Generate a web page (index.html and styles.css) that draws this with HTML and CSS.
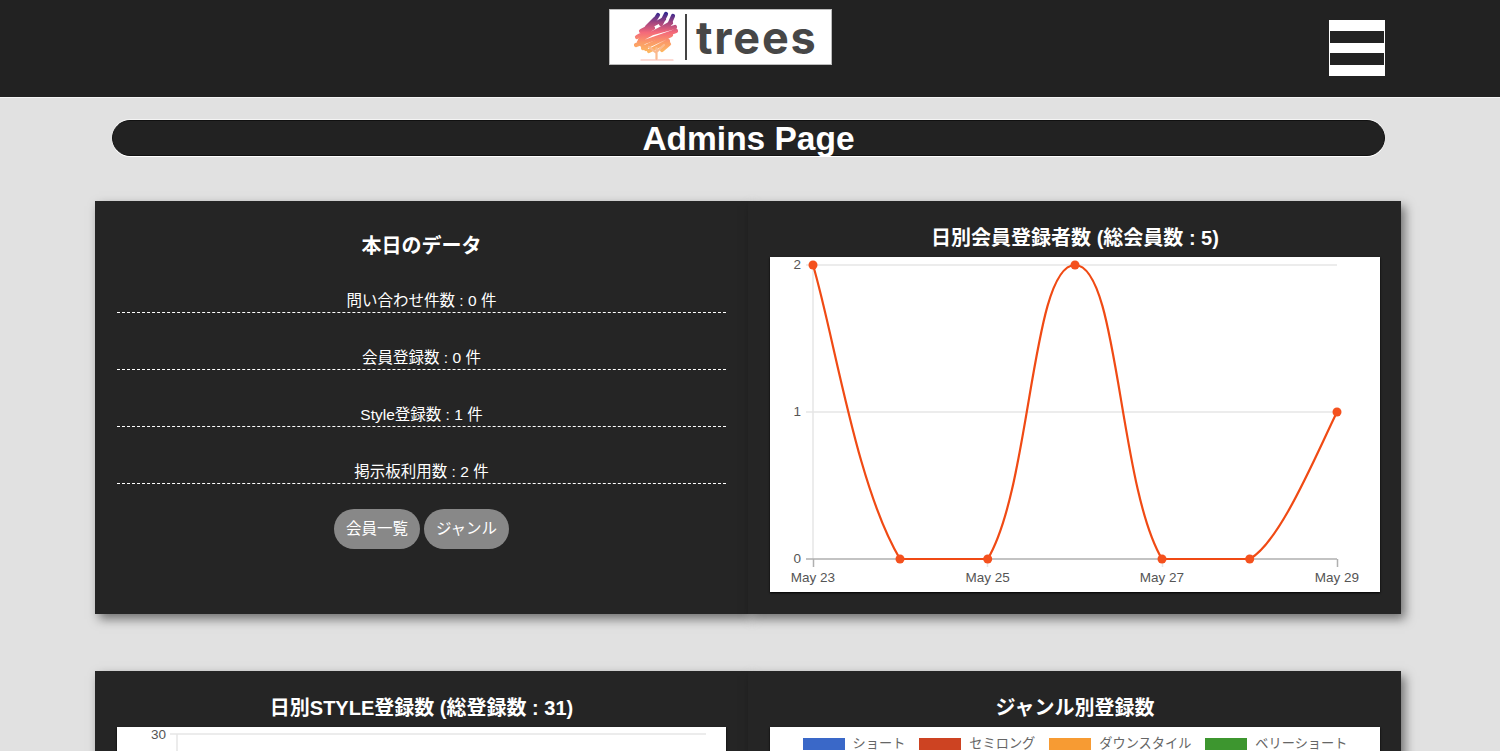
FILE: index.html
```html
<!DOCTYPE html>
<html lang="ja">
<head>
    <meta charset="UTF-8">
    <meta name="viewport" content="width=device-width, initial-scale=1.0">
    <title>Admins Page</title>
    <link rel="stylesheet" href="styles.css">
</head>
<body>
    <header class="site-header">
        <a class="logo" href="#">
            <svg class="logo-tree" width="56" height="54" viewBox="0 0 56 54" fill="none" stroke-linecap="round">
                <defs>
                    <linearGradient id="treeFill" gradientUnits="userSpaceOnUse" x1="0" y1="3" x2="0" y2="42">
                        <stop offset="0" stop-color="#35288f"/>
                        <stop offset="0.25" stop-color="#a5467f"/>
                        <stop offset="0.5" stop-color="#f4697a"/>
                        <stop offset="0.75" stop-color="#fb9a68"/>
                        <stop offset="1" stop-color="#fdb862"/>
                    </linearGradient>
                </defs>
                <g stroke="url(#treeFill)" stroke-width="4.200">
                    <path d="M22 13L27 5M30 14L35 4M38 15L42 6M16 17L24 9"/>
                    <path d="M10 21L33 9M6 27L22 18M9 30L40 13M5 35L45 21M11 26L44 17"/>
                    <path d="M12 38L40 25M18 41L37 31M8 32L15 39M31 40L38 34"/>
                </g>
                <path d="M25.500 49V38M25.500 43L18 37M25.500 42L33 35" stroke="#fbb98e" stroke-width="2.200"/>
                <path d="M10 50H42" stroke="#f9b5a9" stroke-width="1.200"/>
            </svg>
            <span class="logo-divider"></span>
            <span class="logo-text">trees</span>
        </a>
        <button class="menu-button" type="button" aria-label="menu">
            <span></span>
            <span></span>
            <span></span>
        </button>
    </header>

    <main class="admin-main">
        <h1 class="page-title">Admins Page</h1>

        <section class="panel-row">
            <div class="panel panel-today">
                <h2>本日のデータ</h2>
                <ul class="today-list">
                    <li>問い合わせ件数 : 0 件</li>
                    <li>会員登録数 : 0 件</li>
                    <li>Style登録数 : 1 件</li>
                    <li>掲示板利用数 : 2 件</li>
                </ul>
                <div class="today-buttons">
                    <a class="pill-button" href="#">会員一覧</a>
                    <a class="pill-button" href="#">ジャンル</a>
                </div>
            </div>
            <div class="panel">
                <h2>日別会員登録者数 (総会員数 : 5)</h2>
                <div class="chart-box">
                    <svg class="chart" width="610" height="335" viewBox="0 0 610 335">
                        <defs>
                            <clipPath id="plotClip"><rect x="30" y="0" width="550" height="303"/></clipPath>
                        </defs>
                        <path class="grid" d="M36 8H567M36 155H567M43 8V302"/>
                        <path class="grid" d="M217.500 302V310M392.500 302V310"/>
                        <path class="axis" d="M36 302H567M43.500 302V310M567.500 302V310"/>
                        <path class="line" clip-path="url(#plotClip)" d="M43,8 C64.750,81.500 86.300,228.500 130,302 L217.700,302 C261.450,228.500 261.400,8 305,8 C348.600,8 348.300,228.500 392,302 L479.700,302 C510,285 545,200 567,155"/>
                        <g class="dots">
                            <circle cx="43" cy="8" r="4.500"/>
                            <circle cx="130" cy="302" r="4.500"/>
                            <circle cx="217.700" cy="302" r="4.500"/>
                            <circle cx="305" cy="8" r="4.500"/>
                            <circle cx="392" cy="302" r="4.500"/>
                            <circle cx="479.700" cy="302" r="4.500"/>
                            <circle cx="567" cy="155" r="4.500"/>
                        </g>
                        <g class="tick-labels">
                            <text x="31" y="12" text-anchor="end">2</text>
                            <text x="31" y="159" text-anchor="end">1</text>
                            <text x="31" y="306" text-anchor="end">0</text>
                            <text x="43" y="325" text-anchor="middle">May 23</text>
                            <text x="217.700" y="325" text-anchor="middle">May 25</text>
                            <text x="392" y="325" text-anchor="middle">May 27</text>
                            <text x="567" y="325" text-anchor="middle">May 29</text>
                        </g>
                    </svg>
                </div>
            </div>
        </section>

        <section class="panel-row">
            <div class="panel">
                <h2>日別STYLE登録数 (総登録数 : 31)</h2>
                <div class="chart-box">
                    <svg class="chart" width="609" height="335" viewBox="0 0 609 335">
                        <path class="grid" d="M53 7H589M60 7V302"/>
                        <g class="tick-labels">
                            <text x="49" y="12" text-anchor="end">30</text>
                        </g>
                    </svg>
                </div>
            </div>
            <div class="panel">
                <h2>ジャンル別登録数</h2>
                <div class="chart-box">
                    <ul class="legend">
                        <li><span class="swatch swatch-short"></span>ショート</li>
                        <li><span class="swatch swatch-semi"></span>セミロング</li>
                        <li><span class="swatch swatch-down"></span>ダウンスタイル</li>
                        <li><span class="swatch swatch-very"></span>ベリーショート</li>
                    </ul>
                </div>
            </div>
        </section>
    </main>
</body>
</html>
```

FILE: styles.css
```css
* {
    box-sizing: border-box;
}
body {
    margin: 0;
    background-color: #e1e1e1;
    font-family: "Liberation Sans", "Noto Sans CJK JP", sans-serif;
    color: #fff;
}
.site-header {
    display: flex;
    justify-content: center;
    height: 98px;
    padding-top: 9px;
    background-color: #222;
    border-bottom: 1px solid #f4f4f4;
    position: relative;
}
.logo {
    display: flex;
    align-items: center;
    width: 223px;
    height: 56px;
    margin-right: 59px;
    padding-left: 21px;
    background-color: #fff;
    border: 1px solid #bbb;
    text-decoration: none;
}
.logo-tree {
    flex-shrink: 0;
}
.logo-divider {
    width: 2px;
    height: 46px;
    margin-left: -2px;
    background-color: #444;
}
.logo-text {
    margin-left: 9px;
    font-family: Inter, sans-serif;
    font-size: 45px;
    font-weight: 700;
    letter-spacing: 1.8px;
    color: #474747;
    line-height: 1;
}
.menu-button {
    position: absolute;
    top: 20px;
    left: 1329px;
    display: flex;
    flex-direction: column;
    justify-content: space-between;
    width: 56px;
    height: 56px;
    padding: 0;
    background: none;
    border: 1px solid #fff;
}
.menu-button span {
    height: 10px;
    background-color: #fff;
}
.admin-main {
    width: 1306px;
    margin-left: 95px;
}
.page-title {
    width: 1273px;
    height: 36px;
    margin: 22px 0 45px 17px;
    background-color: #222;
    border: 1px solid #111;
    border-radius: 18px;
    box-shadow: 0 1px 0 #fff, 0 -1px 0 #f4f4f4;
    font-size: 33.500px;
    line-height: 35px;
    text-align: center;
}
.panel-row {
    display: grid;
    grid-template-columns: 1fr 1fr;
    margin-bottom: 57px;
}
.panel {
    padding: 27px 21px 22px 22px;
    background-color: #252525;
    box-shadow: 4px 5px 10px rgba(0, 0, 0, 0.5);
}
.panel:first-child {
    padding-right: 22px;
}
.panel h2 {
    margin: 0 0 9px;
    font-size: 20px;
    line-height: 20px;
    text-align: center;
}
.panel-today {
    padding-top: 35px;
}
.panel-today h2 {
    margin-bottom: 0;
}
.today-list {
    list-style: none;
    margin: 0;
    padding: 0;
}
.today-list li {
    margin-top: 35px;
    padding-bottom: 1px;
    border-bottom: 1px dashed #fff;
    font-size: 15.500px;
    line-height: 20px;
    text-align: center;
}
.today-buttons {
    display: flex;
    justify-content: center;
    gap: 4px;
    margin-top: 25px;
}
.pill-button {
    display: block;
    padding: 0 12px;
    background-color: #888;
    border-radius: 20px;
    color: #fff;
    font-size: 15.500px;
    line-height: 40px;
    text-decoration: none;
}
.chart-box {
    height: 335px;
    background-color: #fff;
    box-shadow: 0 1px 2px #000;
}
.chart {
    display: block;
}
.grid {
    fill: none;
    stroke: #e6e6e6;
    stroke-width: 1.500;
}
.axis {
    fill: none;
    stroke: #b0b0b0;
    stroke-width: 1.500;
}
.line {
    fill: none;
    stroke: #f04a14;
    stroke-width: 2.200;
}
.dots {
    fill: #f4511e;
}
.tick-labels {
    font-size: 13.500px;
    fill: #555;
}
.legend {
    display: flex;
    justify-content: center;
    gap: 14px;
    list-style: none;
    margin: 0;
    padding: 9px 0 0;
    color: #666;
    font-size: 13.200px;
    line-height: 16px;
}
.legend li {
    display: flex;
    align-items: center;
    gap: 8px;
}
.swatch {
    width: 42px;
    height: 12px;
}
.swatch-short {
    background-color: #3a68c8;
}
.swatch-semi {
    background-color: #cd4322;
}
.swatch-down {
    background-color: #f79b33;
}
.swatch-very {
    background-color: #3d962f;
}
```
